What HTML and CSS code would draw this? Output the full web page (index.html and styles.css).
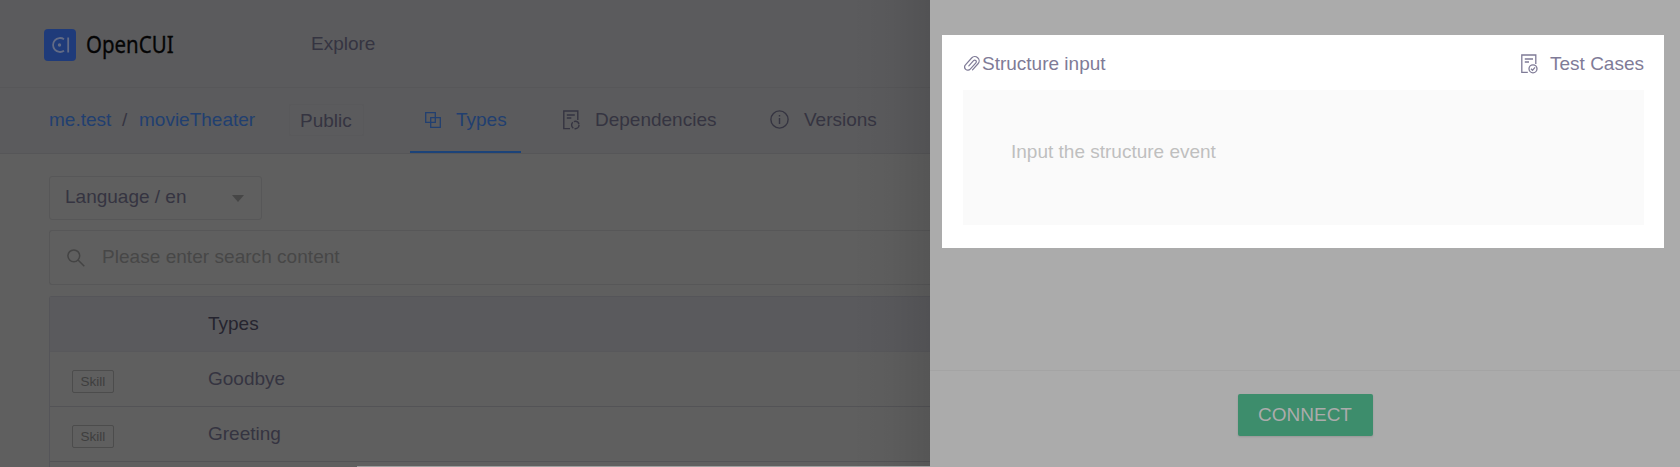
FILE: index.html
```html
<!DOCTYPE html>
<html lang="en">
<head>
<meta charset="utf-8">
<title>OpenCUI</title>
<link rel="stylesheet" href="styles.css">
</head>
<body>
<div class="app">
  <main class="page">
    <header class="top">
      <svg class="logo" width="32" height="32" viewBox="0 0 32 32" fill="none"><rect width="32" height="32" rx="4" fill="#1f3b7a"/><g stroke="#626b85" stroke-width="1.8"><path d="M20 10.200A7 7 0 1 0 20 21.800M24.200 8.500v15"/></g><circle cx="15.500" cy="16" r="1.700" fill="#626b85"/></svg>
      <span class="brand">OpenCUI</span>
      <a class="explore">Explore</a>
    </header>
    <nav class="tabs">
      <a class="crumb owner">me.test</a><span class="slash">/</span><a class="crumb repo">movieTheater</a>
      <span class="public">Public</span>
      <a class="tab types active"><svg width="16" height="16" viewBox="0 0 16 16" fill="none" stroke="currentColor" stroke-width="1.300"><path d="M.7.7h9.600v9.600H.7zM5.700 5.700h9.600v9.600H5.700z"/></svg><span>Types</span></a>
      <a class="tab deps"><svg width="17" height="20" viewBox="0 0 17 20" fill="none" stroke="currentColor" stroke-width="1.400"><path d="M7 18.600H.8V1h14v9M3.800 5h8M3.800 8h4.500"/><circle cx="12.300" cy="15" r="3.700" stroke-dasharray="6.500 1.250"/></svg><span>Dependencies</span></a>
      <a class="tab vers"><svg width="19" height="19" viewBox="0 0 19 19" fill="none" stroke="currentColor" stroke-width="1.400"><circle cx="9.500" cy="9.500" r="8.600"/><path d="M9.500 8v6M9.500 5v1.600"/></svg><span>Versions</span></a>
    </nav>
    <section class="content">
      <div class="select"><span class="lang">Language / en</span><i class="caret"></i></div>
      <div class="search"><svg width="18" height="18" viewBox="0 0 18 18" fill="none" stroke="currentColor" stroke-width="1.500"><circle cx="6.800" cy="6.800" r="5.900"/><path d="M11 11l6.300 6.300"/></svg><span class="hint">Please enter search content</span></div>
      <div class="table">
        <div class="row head"><span class="cell"></span><span class="th">Types</span></div>
        <div class="row"><span class="cell"><b class="tag">Skill</b></span><span class="name">Goodbye</span></div>
        <div class="row"><span class="cell"><b class="tag">Skill</b></span><span class="name">Greeting</span></div>
        <div class="row"></div>
      </div>
    </section>
  </main>
  <aside class="drawer">
    <section class="card">
      <div class="card-head">
        <svg class="clip" width="16" height="18" viewBox="-8 -9 16 18" fill="none" stroke="currentColor" stroke-width="1.200" stroke-linecap="round"><path transform="rotate(42)" d="M4.300 4V-4.200A4.300 4.300 0 0 0-4.300-4.200V5A3.200 3.200 0 0 0 2.100 5V-3.500A1.600 1.600 0 0 0-1.100-3.500V3.500"/></svg>
        <span class="title">Structure input</span>
        <svg class="case-icon" width="17" height="20" viewBox="0 0 17 20" fill="none" stroke="currentColor" stroke-width="1.300"><path d="M6.800 18.400H.8V1h14v9M3.800 5h8.200M3.800 8h4.200"/><circle cx="12" cy="14.800" r="4"/><path d="M10 14.800l1.500 1.500 2.500-3"/></svg>
        <span class="cases">Test Cases</span>
      </div>
      <div class="editor"><span class="placeholder">Input the structure event</span></div>
    </section>
    <footer class="actions"><button class="connect">CONNECT</button></footer>
  </aside>
</div>
</body>
</html>
```
FILE: styles.css
```css
* { box-sizing: border-box; }
body { margin: 0; background: #5f5f5f; font: 19px/24px "Liberation Sans", Arial, sans-serif; color: #353441; }
.app { display: flex; width: 1680px; height: 467px; overflow: hidden; }
svg { display: block; flex: none; }
span, a { white-space: nowrap; }
.page { width: 930px; flex: none; position: relative; overflow: hidden; }
.page::after { content: ""; position: absolute; top: 0; right: 0; bottom: 0; width: 80px; background: linear-gradient(90deg, transparent, rgba(0,0,0,.03) 50%, rgba(0,0,0,.1)); }
.page::before { content: ""; position: absolute; left: 357px; right: 0; bottom: 0; height: 1px; z-index: 2; background: #9e9e9e; }
.top { height: 88px; padding: 1px 0 0 44px; display: flex; align-items: center; background: #5b5b5d; border-bottom: 1px solid #575759; }
.logo { margin-top: 2px; }
.brand { margin: 0 0 1px 10px; width: 225px; font: 23px/28px "Noto Sans", sans-serif; color: #050505; -webkit-text-stroke: .3px; transform: scaleX(.89); transform-origin: 0 50%; }
.tabs { height: 66px; padding-left: 49px; display: flex; align-items: center; background: #5b5b5d; border-bottom: 1px solid #565658; }
.crumb { color: #213f70; }
.owner { width: 73px; }
.slash { width: 17px; }
.repo { width: 150px; }
.crumb, .slash { margin-bottom: 1px; }
.public { width: 75px; height: 32px; padding-left: 10px; margin-bottom: 1px; line-height: 31px; border: 1px solid #59595b; border-radius: 2px; }
.tab { height: 65px; padding-bottom: 1px; display: flex; align-items: center; }
.tab svg { margin: 0 15px 1px 0; }
.types { margin-left: 46px; width: 111px; padding: 1px 0 0 15px; color: #213f70; border-bottom: 2px solid #1c4379; }
.deps { margin-left: 37px; width: 207px; padding-left: 5px; }
.vers { padding-left: 5px; }
.content { padding: 22px 0 0 49px; }
.select { width: 213px; height: 44px; padding: 0 17px 3px 15px; display: flex; align-items: center; justify-content: space-between; border: 1px solid #575758; border-radius: 3px; }
.caret { border: 6px solid transparent; border-top: 7px solid #464646; border-bottom: 0; margin-top: 3px; }
.search { margin-top: 10px; height: 55px; padding-left: 17px; display: flex; align-items: center; border: 1px solid #575758; border-right: 0; border-radius: 3px 0 0 3px; color: #444; }
.hint { margin: 0 0 1px 17px; color: #474747; letter-spacing: .04px; }
.table { margin-top: 11px; height: 180px; border: 1px solid #555559; border-width: 1px 0 0 1px; border-radius: 3px 0 0 0; }
.row { height: 55px; display: flex; align-items: center; border-bottom: 1px solid #535356; }
.row.head { background: #5a5a5d; color: #25242f; border-color: #58585b; }
.th { margin-bottom: 1px; }
.cell { width: 158px; padding-left: 22px; display: flex; }
.tag { width: 42px; height: 23px; margin-top: 4px; font-size: 13.5px; line-height: 21px; font-weight: normal; text-align: center; color: #3e3e3e; border: 1px solid #4c4c4c; border-radius: 2px; }
.drawer { width: 750px; background: #ababab; display: flex; flex-direction: column; }
.card { margin: 35px 16px 0 12px; height: 213px; padding: 0 20px 0 21px; background: #fff; }
.card-head { height: 55px; padding-top: 2px; display: flex; align-items: center; color: #7f7b97; }
.clip { margin: 0 2px 0 1px; }
.case-icon { margin: 0 12px 0 auto; }
.editor { height: 135px; padding: 50px 48px 0; background: #fafafa; color: #bfbfbf; }
.actions { margin-top: 122px; height: 97px; padding-top: 23px; border-top: 1px solid #a4a4a4; display: flex; justify-content: center; align-items: flex-start; }
.connect { width: 135px; height: 42px; border: 0; padding: 0; border-radius: 2px; background: #3d8d6c; color: #ababab; font: 19px/42px "Liberation Sans", Arial, sans-serif; box-shadow: 0 1px 2px rgba(0,0,0,.12); }
```
